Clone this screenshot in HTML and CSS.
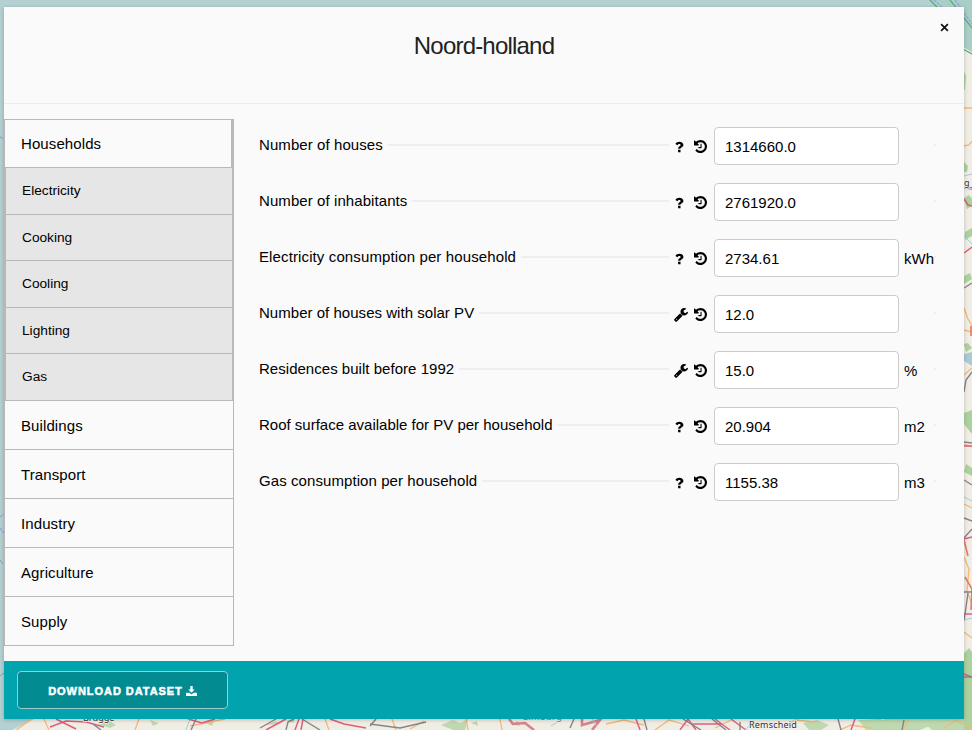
FILE: index.html
```
<!DOCTYPE html>
<html lang="en">
<head>
<meta charset="utf-8">
<title>Noord-holland</title>
<link rel="stylesheet" href="styles.css">
</head>
<body>
<svg class="map" viewBox="0 0 972 730" width="972" height="730" aria-hidden="true">
  <rect width="972" height="730" fill="#f0ede5"/>
  <path fill="#b4d0d0" d="M0 0H972V52L962 46V60H60V700L34 719 12 730H0z"/>
  <path fill="#a9cec6" d="M926 0h46v52l-10-6V8z"/>
  <g fill="#add19e">
    <path d="M964 72l2 4-1 14h-1zM964 162l4 4-1 6h-3zM964 198l5-3 3 4v7l-5 3zM965 232l7-4v8l-7 4zM964 276l6-3 2 6-8 5zM964 344l4-1 4 5-6 4zM964 413l8-3v24l-8-10zM966 464l6 4v8l-8-4zM964 653l5-5 3 4v78h-8z"/>
    <path d="M98 724l10-4 8 5-6 3zM150 720l9 3-6 3zM203 722l12-3-3 7zM266 725l10-4 5 3zM286 720h9l-2 3zM441 725l12-5 7 3 8-4-3 11h-12zM471 723l6-2 1 5zM509 724l9-3 2 5zM803 723l14-3 12 5-8 5h-12zM858 720l22-1 24 6-12 5h-26zM884 719h50v5l-14 6h-30zM921 719h51v11h-40z" fill-opacity=".75"/>
  </g>
  <path fill="#aacbd5" d="M964 354l8-2v14l-8-5z"/>
  <g fill="none" stroke="#56a879" stroke-width="1.2"><path d="M930 0l12 12M950 0l22 28M961 48l11 6"/></g>
  <g fill="none" stroke="#8da8e4" stroke-width="1.4" stroke-dasharray="3 1"><path d="M934 0l14 12M955 0l17 24M0 137l4 2M0 517l4-3M0 528l4 5"/></g>
  <g fill="none" stroke="#f3b877" stroke-width="1.3">
    <path d="M964 108h8M964 146l5-1 3-4M964 308l4 11 4 7M964 330l8 2M964 375l8-7M964 444l8 3M964 504l8 4M964 557l5 12-2 22 5 13M964 632l8 6M16 730l16-11M44 719l5 11M135 730l4-11M190 726l20-4 15-3M325 719l4 11M392 719l4 11M410 729l14-8M500 719l2 11M466 719l2 11M606 724l18-4 20 5M655 730l14-10 20 6M715 728l16-8M783 728l12-8 20 2M840 730l11-5 20 3M903 730l6-10M944 728l12-8 16 9"/>
  </g>
  <g fill="none" stroke="#df5f83" stroke-width="1.5">
    <path d="M964 199l4 6 4 1M964 253l8-6M964 446h8M964 539l8-2M964 614h8M964 674l8 3M50 727l16-6 20 1 18 5M56 719l20 10M188 719l14 4 13-4M266 730l20-11M330 719l14 5 22 4M299 719l-4 11M303 719l-2 11M636 719l4 11M680 730l8-11 8 11M692 724h30M715 719l15 11M731 719l15 11M851 730l4-11"/>
  </g>
  <g fill="none" stroke="#e9795e" stroke-width="1.6"><path d="M964 540l4 16M965 577l7 12-1 21M971 326v10"/></g>
  <g fill="none" stroke="#d8838b" stroke-width="2.6"><path d="M509 719l4 5 12-1 9 7M582 719v6l18-5-8 10"/></g>
  <g fill="none" stroke="#87848a" stroke-width="1.4">
    <path d="M964 188l8 1M964 288l8-5M964 392l2-12 6-8M964 442l8 1M964 480l8 5M964 518l8 3M964 538l8-9M964 592h8M968 593l-4 28M964 677h8M93 724l8 6M196 719l-5 11M260 728l16-9M286 730l2-8 6-3M302 719l18 11M370 724l30 4 26-6M376 719l-6 7M570 728l4-9M644 719l3 11M683 719l18 11M712 719l14 11M740 722v8M838 719l3 11M904 720l-2 10"/>
  </g>
  <g fill="none" stroke="#a5ccd7"><path d="M964 176l8-2M964 236l8 8M964 497l8 4M964 620l8-2M551 726l10-6M592 719l5 8M190 719l-4 11M745 730l8-8"/></g>
  <path fill="none" stroke="#9e91c3" d="M0 676l4-3M0 560l3 4"/>
  <text class="place" x="83" y="721">Brugge</text>
  <text class="place region" x="523" y="720">Limburg</text>
  <text class="place town" x="749" y="728">Remscheid</text>
  <text class="place" x="964" y="186">g_</text>
</svg>

<svg class="defs" width="0" height="0" aria-hidden="true">
  <symbol id="history" viewBox="128 128 1536 1536"><path d="M1664 896q0 156-61 298t-164 245-245 164-298 61q-172 0-327-72.500t-264-204.500q-7-10-6.500-22.500t8.500-20.500l137-138q10-9 25-9 16 2 23 12 73 95 179 147t225 52q104 0 198.500-40.500t163.500-109.500 109.500-163.500 40.500-198.500-40.500-198.500-109.500-163.500-163.500-109.500-198.500-40.500q-98 0-188 35.500t-160 101.500l137 138q31 30 14 69-17 40-59 40h-448q-26 0-45-19t-19-45v-448q0-42 40-59 39-17 69 14l130 129q107-101 244.500-156.500t284.500-55.500q156 0 298 61t245 164 164 245 61 298zm-640-288v448q0 14-9 23t-23 9h-320q-14 0-23-9t-9-23v-64q0-14 9-23t23-9h224v-352q0-14 9-23t23-9h64q14 0 23 9t9 23z"/></symbol>
  <symbol id="question" viewBox="0 0 9 12"><path d="M3.100 8.700h2.400v2.500H3.100zM.4 3C1.200 1.500 2.500.7 4.400.7c2.200 0 4 1.300 4 3.200 0 2.200-2.900 2.300-2.900 3.900H3.100c0-2.600 2.500-2.500 2.500-3.800 0-.7-.6-1-1.300-1-.8 0-1.300.4-1.900 1.300z"/></symbol>
  <symbol id="wrench" viewBox="0 0 1664 1664"><path d="M384 1344q0-26-19-45t-45-19-45 19-19 45 19 45 45 19 45-19 19-45zm644-420l-682 682q-37 37-90 37-52 0-91-37l-106-108q-38-36-38-90 0-53 38-91l681-681q39 98 114.500 173.500t173.500 114.500zm634-435q0 39-23 106-47 134-164.500 217.500t-258.500 83.500q-185 0-316.500-131.500t-131.500-316.500 131.500-316.500 316.500-131.500q58 0 121.500 16.500t107.500 46.500q16 11 16 28t-16 28l-293 169v224l193 107q5-3 79-48.500t135.500-81 70.500-35.500q15 0 23.500 10t8.500 25z"/></symbol>
  <symbol id="download" viewBox="0 0 12 11"><path d="M4.700 0h2.600v3.800h2.200L6 7.300 2.500 3.800h2.200zM0 7.400h3.700L6 9.300l2.300-1.900H12V11H0z"/></symbol>
</svg>

<main class="modal">
  <header class="head">
    <h1>Noord-holland</h1>
    <button class="close" aria-label="Close"><svg viewBox="0 0 8 8" width="9" height="9"><path d="M1 1l6 6M7 1L1 7"/></svg></button>
  </header>
  <div class="content">
    <nav class="tabs">
      <a class="tab active">Households</a>
      <div class="subs">
        <a>Electricity</a>
        <a>Cooking</a>
        <a>Cooling</a>
        <a>Lighting</a>
        <a>Gas</a>
      </div>
      <a class="tab">Buildings</a>
      <a class="tab">Transport</a>
      <a class="tab">Industry</a>
      <a class="tab">Agriculture</a>
      <a class="tab">Supply</a>
    </nav>
    <form class="fields">
      <div class="row"><label class="loose">Number of houses</label><i class="rule"></i><svg class="icon q"><use href="#question"/></svg><svg class="icon"><use href="#history"/></svg><input value="1314660.0"><span class="unit"></span><i class="dot"></i></div>
      <div class="row"><label class="loose">Number of inhabitants</label><i class="rule"></i><svg class="icon q"><use href="#question"/></svg><svg class="icon"><use href="#history"/></svg><input value="2761920.0"><span class="unit"></span><i class="dot"></i></div>
      <div class="row"><label class="loose wide">Electricity consumption per household</label><i class="rule"></i><svg class="icon q"><use href="#question"/></svg><svg class="icon"><use href="#history"/></svg><input value="2734.61"><span class="unit">kWh</span><i class="dot"></i></div>
      <div class="row"><label class="snug">Number of houses with solar PV</label><i class="rule"></i><svg class="icon w"><use href="#wrench"/></svg><svg class="icon"><use href="#history"/></svg><input value="12.0"><span class="unit"></span><i class="dot"></i></div>
      <div class="row"><label class="snug">Residences built before 1992</label><i class="rule"></i><svg class="icon w"><use href="#wrench"/></svg><svg class="icon"><use href="#history"/></svg><input value="15.0"><span class="unit">%</span><i class="dot"></i></div>
      <div class="row"><label>Roof surface available for PV per household</label><i class="rule"></i><svg class="icon q"><use href="#question"/></svg><svg class="icon"><use href="#history"/></svg><input value="20.904"><span class="unit">m2</span><i class="dot"></i></div>
      <div class="row"><label class="loose">Gas consumption per household</label><i class="rule"></i><svg class="icon q"><use href="#question"/></svg><svg class="icon"><use href="#history"/></svg><input value="1155.38"><span class="unit">m3</span><i class="dot"></i></div>
    </form>
  </div>
  <footer class="foot">
    <button class="download"><span>DOWNLOAD DATASET</span><svg width="11" height="10"><use href="#download"/></svg></button>
  </footer>
</main>
</body>
</html>
```

FILE: styles.css
```
* { box-sizing: border-box; }
body {
  margin: 0;
  height: 730px;
  padding: 7px 8px 11px 4px;
  overflow: hidden;
  font-family: "Liberation Sans", Arial, sans-serif;
  font-size: 15px;
  color: #000;
}
.map { position: absolute; left: 0; top: 0; z-index: -1; }
.defs { position: absolute; }
.place { font: 9px "Noto Sans", sans-serif; fill: #333; stroke: #f5f2ec; stroke-width: 1.5px; paint-order: stroke; }
.town { letter-spacing: .2px; }
.region { fill: #8a73ae; letter-spacing: .5px; }

.modal {
  display: flex;
  flex-direction: column;
  width: 960px;
  height: 712px;
  background: #fafafa;
  box-shadow: 0 1px 4px rgba(0, 0, 0, .22);
}
.head {
  position: relative;
  height: 97px;
  padding-top: 25px;
  border-bottom: 1px solid #ececec;
  text-align: center;
}
h1 {
  margin: 0;
  font-size: 24px;
  font-weight: 400;
  line-height: 28px;
  letter-spacing: -.8px;
  color: #222;
}
button { font-family: inherit; }
.close {
  position: absolute;
  right: 15px;
  top: 16px;
  width: 9px;
  height: 9px;
  padding: 0;
  border: 0;
  background: none;
  line-height: 0;
}
.close svg { display: block; }
.close path { stroke: #111; stroke-width: 1.5; }

.content { display: flex; flex: 1; padding-top: 15px; }
.tabs {
  width: 230px;
  height: 527px;
  border: 1px solid #b8b8b8;
  border-bottom: 0;
}
.tab {
  display: block;
  height: 49px;
  padding-left: 16px;
  border-bottom: 1px solid #b8b8b8;
  line-height: 49px;
  letter-spacing: .1px;
}
.tab.active { height: 48px; border-right: 2px solid #b8b8b8; line-height: 47px; }
.subs { border: solid #b8b8b8; border-width: 0 1px; background: #e6e6e6; }
.subs a {
  display: block;
  height: 46.6px;
  padding-left: 16px;
  border-bottom: 1px solid #b8b8b8;
  font-size: 13.7px;
  line-height: 46px;
}

.fields { width: 677px; margin-left: 25px; padding-top: 8px; }
.row { display: flex; align-items: center; height: 38px; margin-bottom: 18px; }
label { margin-top: -4px; white-space: nowrap; }
.snug { letter-spacing: .03px; }
.loose { letter-spacing: .08px; }
.wide { letter-spacing: .12px; }
.rule { flex: 1; height: 2px; margin: -2px 6px 0 5px; background: #eee; }
.icon { flex: none; width: 13px; height: 13px; margin: 1px 7px 0 0; }
.icon.q { width: 9px; height: 12px; margin-right: 10px; }
.icon.w { width: 14px; height: 14px; margin: 1px 6px 0 -1px; }
input {
  flex: none;
  width: 185px;
  height: 38px;
  padding: 0 10px;
  border: 1px solid #ccc;
  border-radius: 4px;
  background: #fff;
  font: inherit;
  color: #000;
}
.unit { width: 30px; margin: 0 0 0 5px; }
.dot { width: 2px; height: 2px; margin-top: -2px; background: #eee; }

.foot { height: 58px; padding: 10px 13px; background: #00a3ae; }
.download {
  display: flex;
  align-items: center;
  justify-content: center;
  gap: 3px;
  width: 211px;
  height: 38px;
  padding: 2px 0 0;
  border: 1px solid #9fc9ca;
  border-radius: 4px;
  background: #028b91;
  color: #fff;
  font-size: 11px;
  font-weight: 700;
  letter-spacing: .95px;
  -webkit-text-stroke: .5px #fff;
}
.download svg { fill: #fff; -webkit-text-stroke: 0; }
```
